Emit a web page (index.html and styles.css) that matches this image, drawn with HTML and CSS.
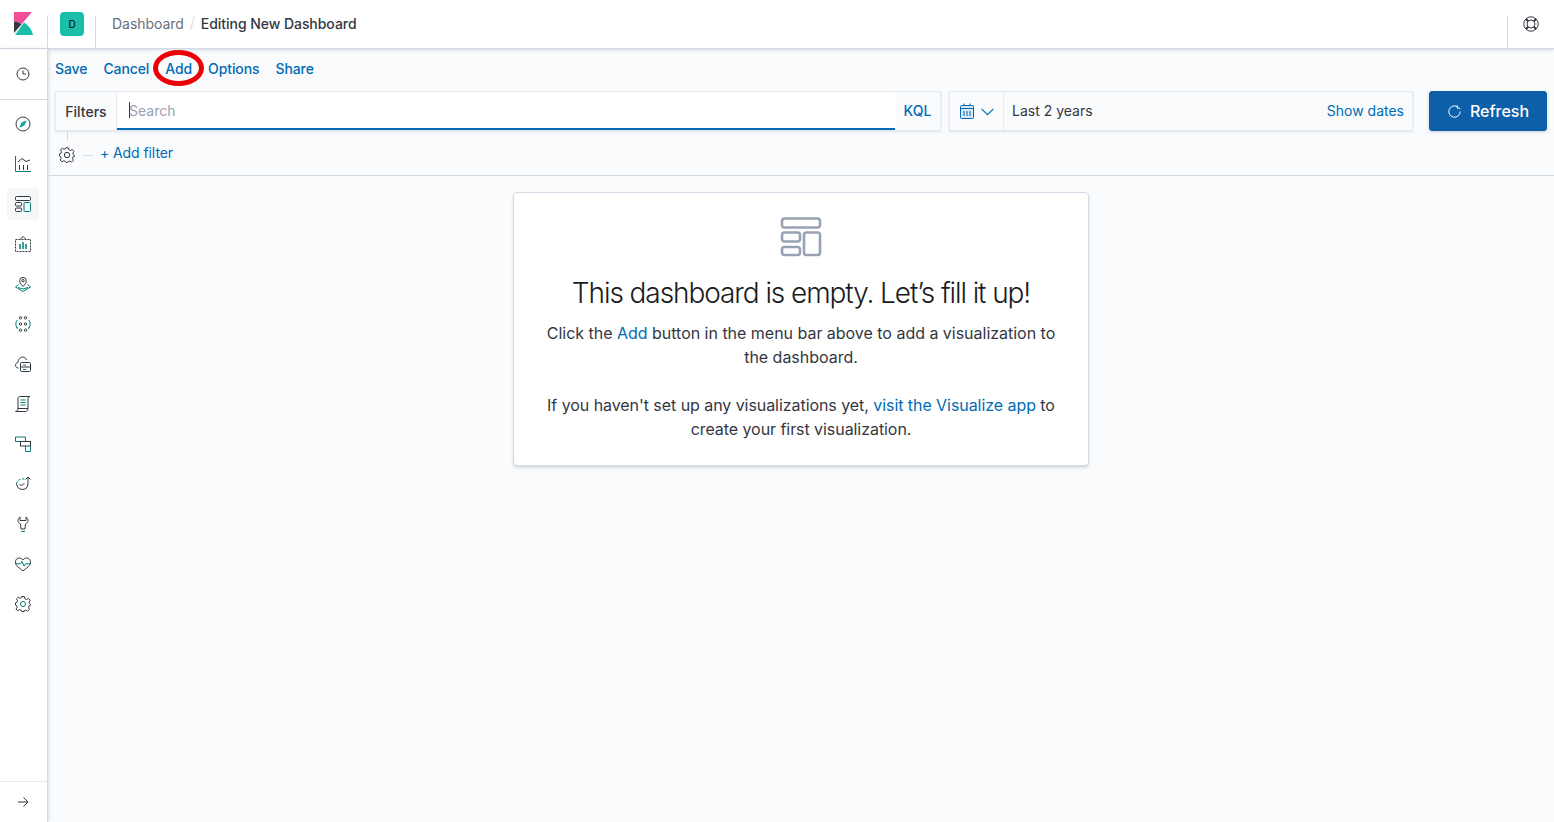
FILE: index.html
```html
<!DOCTYPE html>
<html>
<head>
<meta charset="UTF-8">
<title>Editing New Dashboard</title>
<link rel="stylesheet" href="styles.css">
</head>
<body>
<header class="topbar">
	<div class="logo-cell">
		<svg width="20" height="24" viewBox="0 0 20 24"><path d="M1 0H19L8.500 12.300C6.600 10.600 4 9.500 1 9.400Z" fill="#f04e98"/><path d="M1 9.400C4 9.500 6.600 10.600 8.500 12.300L1 21Z" fill="#343741"/><path d="M2 23H20C19.400 18.800 16.400 14.200 11 10.200Z" fill="#1bbfa9"/></svg>
	</div>
	<div class="space-cell"><span class="space-badge">D</span></div>
	<nav class="crumbs">
		<span class="crumb-link">Dashboard</span>
		<span class="crumb-sep"></span>
		<span class="crumb-now">Editing New Dashboard</span>
	</nav>
	<div class="help-cell">
		<svg width="16" height="16" viewBox="0 0 16 16" fill="none" stroke="#343741"><circle cx="8" cy="8" r="7.200"/><circle cx="8" cy="8" r="4"/><path d="M2.900 2.900L5.200 5.200M13.100 2.900L10.800 5.200M2.900 13.100L5.200 10.800M13.100 13.100L10.800 10.800" stroke-width="2"/></svg>
	</div>
</header>

<div class="layout">
	<aside class="sidenav">
		<div class="nav-recent">
			<svg width="16" height="16" viewBox="0 0 16 16" fill="none" stroke="#343741"><circle cx="8" cy="8" r="6"/><path d="M8 4.500V8H11"/></svg>
		</div>
		<div class="nav-list">
			<a class="nav-item"><svg width="16" height="16" viewBox="0 0 16 16" fill="none" stroke="#343741"><circle cx="8" cy="8" r="7"/><path d="M11 5L9.200 9.200L5 11L6.800 6.800Z" fill="#1ba9a0" stroke="#1ba9a0"/></svg></a>
			<a class="nav-item"><svg width="16" height="16" viewBox="0 0 16 16" fill="none" stroke="#343741"><path d="M.5 0V15.500H16" stroke="#017d73"/><path d="M4.500 9V14M8.500 9V14M12.500 9V14"/><path d="M3 6L7 2.500L11 5.500L15 4"/></svg></a>
			<a class="nav-item active"><svg width="16" height="16" viewBox="0 0 16 16" fill="none" stroke="#343741"><rect x=".5" y=".5" width="15" height="4" rx="1"/><rect x=".5" y="6.500" width="6" height="3.500" rx="1"/><rect x=".5" y="12" width="6" height="3.500" rx="1"/><rect x="9" y="6.500" width="6.500" height="9" rx="1" stroke="#017d73"/></svg></a>
			<a class="nav-item"><svg width="16" height="16" viewBox="0 0 16 16" fill="none" stroke="#343741"><rect x=".5" y="3.500" width="15" height="12" stroke-dasharray="2 1"/><path d="M5 3.500L8 .5L11 3.500"/><path d="M5 8V13M8 6V13M11 8V13" stroke="#017d73" stroke-width="1.500"/></svg></a>
			<a class="nav-item"><svg width="16" height="16" viewBox="0 0 16 16" fill="none" stroke="#343741"><path d="M8 10.500C6 8.500 4.700 6.800 4.700 4.700A3.300 3.300 0 0 1 11.300 4.700C11.300 6.800 10 8.500 8 10.500Z"/><circle cx="8" cy="4.700" r="1.200"/><path d="M3.500 8.500L.5 11L8 15.500L15.500 11L12.500 8.500M3 11.500L8 13L13 11.500" stroke="#017d73"/></svg></a>
			<a class="nav-item"><svg width="16" height="16" viewBox="0 0 16 16" fill="none" stroke="#343741"><circle cx="5.500" cy="1.800" r="1.200"/><circle cx="10.500" cy="1.800" r="1.200"/><circle cx="5.500" cy="8" r="1.200"/><circle cx="10.500" cy="8" r="1.200"/><circle cx="5.500" cy="14.200" r="1.200"/><circle cx="10.500" cy="14.200" r="1.200"/><path d="M2.500 4C.3 6 .3 10 2.500 12M1 11.500L3 12.500M13.500 4C15.700 6 15.700 10 13.500 12M15 11.500L13 12.500" stroke="#017d73"/></svg></a>
			<a class="nav-item"><svg width="16" height="16" viewBox="0 0 16 16" fill="none" stroke="#343741"><path d="M3.500 12C1.500 12 .5 10.700 .5 9.200C.5 7.800 1.500 6.800 2.800 6.700C3 3.300 5.300 1 7.500 1C9.500 1 11 2.200 11.500 4"/><rect x="5.500" y="6.500" width="10" height="9" rx="1"/><path d="M5.500 11H15.500"/><path d="M8 9H11M8 13.500H11" stroke="#017d73"/></svg></a>
			<a class="nav-item"><svg width="16" height="16" viewBox="0 0 16 16" fill="none" stroke="#343741"><path d="M3 13V2.500C3 1.300 4 .5 5 .5H15C13.800 .5 13 1.300 13 2.500V12.500"/><path d="M.5 15.500H10.500C11.800 15.500 13 14.500 13 12.500H3C3 14 1.800 15.500 .5 15.500Z"/><path d="M5.500 4H10.500M5.500 6.500H10.500M5.500 9H10.500" stroke="#017d73"/></svg></a>
			<a class="nav-item"><svg width="16" height="16" viewBox="0 0 16 16" fill="none" stroke="#343741"><path d="M5.500 5.500H.5V1H10.500V5.500" stroke="#017d73"/><rect x="5.500" y="5.500" width="10" height="4.500"/><path d="M10.500 10V15.500H15.500V10" stroke="#017d73"/></svg></a>
			<a class="nav-item"><svg width="16" height="16" viewBox="0 0 16 16" fill="none" stroke="#343741"><path d="M1.500 8A6 6 0 0 0 12 11.500C13 10 13 7 13 1"/><path d="M10.500 3.500L13 1L15.500 3.500"/><path d="M4.500 8L6.500 10L9.500 7"/><path d="M1.500 8A6 6 0 0 1 9.500 3.200" stroke="#017d73" stroke-dasharray="2.500 1.500"/></svg></a>
			<a class="nav-item"><svg width="16" height="16" viewBox="0 0 16 16" fill="none" stroke="#343741"><path d="M5 1C3.500 2 3 3.200 3 4.500C3 6.300 4.300 7.500 5.500 8L6 13H10L10.500 8C11.700 7.500 13 6.300 13 4.500C13 3.200 12.500 2 11 1V4.500H5Z"/><path d="M6 15.500H10" stroke="#017d73"/></svg></a>
			<a class="nav-item"><svg width="16" height="16" viewBox="0 0 16 16" fill="none" stroke="#343741"><path d="M2.500 10.500C1.200 9 .5 7.800 .5 5.800C.5 3.500 2.200 2 4.200 2C5.800 2 7 2.800 8 4C9 2.800 10.200 2 11.800 2C13.800 2 15.500 3.500 15.500 5.800C15.500 7.800 14.800 9 13.500 10.500L8 15L2.500 10.500Z"/><path d="M0 7.800H5.500L7 5.500L9 10L10.500 7.800H16" stroke="#017d73"/></svg></a>
			<a class="nav-item"><svg width="16" height="16" viewBox="0 0 16 16" fill="none" stroke="#343741"><path d="M6.700 .5H9.300L9.800 2.700L11.500 3.500L13.500 2.400L15.300 4.300L14 6.200L14.800 7.800L15.500 8.500V9.200L14 9.800L13.500 11.600L14.500 13.500L12.600 15.200L10.800 14L9.300 14.700V15.500H6.700L6.200 14.200L4.600 13.600L2.700 14.800L1 13L2.200 11.200L1.500 9.600L.5 9V6.800L2 6.300L2.500 4.600L1.500 2.800L3.300 1.100L5 2.300L6.500 1.700Z"/><circle cx="8" cy="8" r="2.500" stroke="#017d73"/></svg></a>
		</div>
		<div class="nav-toggle">
			<svg width="16" height="16" viewBox="0 0 16 16" fill="none" stroke="#343741"><path d="M3 8H12.500M8.500 3.500L13 8L8.500 12.500"/></svg>
		</div>
	</aside>

	<main class="content">
		<div class="menu-row">
			<a class="menu-link">Save</a>
			<a class="menu-link">Cancel</a>
			<a class="menu-link">Add</a>
			<a class="menu-link">Options</a>
			<a class="menu-link">Share</a>
		</div>
		<span class="circle-mark"></span>

		<div class="query-row">
			<div class="query-box">
				<span class="filters-label">Filters</span>
				<div class="search-input"><span class="caret"></span><span class="placeholder">Search</span></div>
				<span class="kql">KQL</span>
			</div>
			<div class="date-box">
				<span class="date-icons">
					<svg width="16" height="16" viewBox="0 0 16 16" fill="none" stroke="#006bb4"><rect x="1.500" y="2.500" width="13" height="13" rx="1" fill="#d9e8f3"/><path d="M1.500 5.500H14.500M5 .5V3M11 .5V3M5 8V13M8 8V13M11 8V13"/></svg>
					<svg width="13" height="13" viewBox="0 0 12 12" fill="none" stroke="#006bb4"><path d="M.5 3.500L6 9L11.500 3.500"/></svg>
				</span>
				<span class="date-text">Last 2 years</span>
				<span class="show-dates">Show dates</span>
			</div>
			<button class="refresh-btn">
				<svg width="13" height="13" viewBox="0 0 16 16" fill="none" stroke="#fff" stroke-width="1.200"><path d="M11.500 2A7 7 0 1 0 15 8"/><path d="M11.500 .5V4H15"/></svg>
				Refresh
			</button>
		</div>

		<div class="filter-row">
			<span class="filter-stem"></span>
			<svg width="16" height="16" viewBox="0 0 16 16" fill="none" stroke="#343741"><path d="M6.700 .8H9.300L9.800 2.700L11.500 3.500L13.300 2.500L15 4.500L13.800 6.200L14.300 7.800L15.500 8.500V9.300L14 9.800L13.500 11.600L14.500 13.300L12.600 15L10.800 14L9.300 14.600L8.800 15.500H7.200L6.200 14.200L4.600 13.800L2.900 14.800L1.100 13L2.200 11.200L1.600 9.600L.5 9V7L2 6.300L2.500 4.600L1.500 2.800L3.300 1.300L5 2.300L6.500 1.700Z"/><circle cx="8" cy="8" r="2.700"/></svg>
			<span class="filter-dash"></span>
			<a class="add-filter">+ Add filter</a>
		</div>

		<div class="canvas">
			<section class="empty-card">
				<svg class="empty-icon" width="42" height="40" viewBox="0 0 42 40" fill="none" stroke="#98a2b3" stroke-width="2.600"><rect x="2" y="1.500" width="38" height="9" rx="2.500"/><rect x="2" y="15.500" width="18" height="9" rx="2.500"/><rect x="2" y="30" width="18" height="8" rx="2.500"/><rect x="24" y="15.500" width="16" height="22.500" rx="2.500"/></svg>
				<h1 class="empty-title">This dashboard is empty. Let’s fill it up!</h1>
				<p class="empty-text">Click the <a class="text-link">Add</a> button in the menu bar above to add a visualization to the dashboard.</p>
				<p class="empty-text">If you haven't set up any visualizations yet, <a class="text-link">visit the Visualize app</a> to create your first visualization.</p>
			</section>
		</div>
	</main>
</div>
</body>
</html>
```

FILE: styles.css
```css
* {
	box-sizing: border-box;
}
html, body {
	height: 100%;
}
body {
	margin: 0;
	font-family: Inter, "Noto Sans", sans-serif;
	font-size: 14px;
	color: #343741;
	background-color: #fafbfd;
	overflow: hidden;
	display: flex;
	flex-direction: column;
}
a {
	color: #006bb4;
}

.topbar {
	height: 49px;
	flex: none;
	display: flex;
	background-color: #fff;
	border-bottom: 1px solid #d3dae6;
	box-shadow: 0 1px 3px rgba(152, 162, 179, 0.4);
}
.logo-cell {
	width: 47px;
	padding: 12px 0 0 13px;
}
.space-cell {
	width: 48px;
	height: 32px;
	margin-top: 16px;
	border-left: 1px solid #d3dae6;
	position: relative;
}
.space-badge {
	position: absolute;
	left: 12px;
	top: -4px;
	width: 24px;
	height: 24px;
	border-radius: 4px;
	background-color: #1bbfa9;
	color: #000;
	font-size: 10px;
	line-height: 24px;
	text-align: center;
}
.crumbs {
	flex: 1;
	display: flex;
	align-items: center;
	height: 32px;
	margin-top: 16px;
	padding: 0 0 18px 16px;
	border-left: 1px solid #d3dae6;
}
.crumb-link {
	color: #69707d;
	letter-spacing: -0.04px;
}
.crumb-sep {
	width: 1px;
	height: 14px;
	margin: 0 8px;
	background-color: #d3dae6;
	transform: rotate(15deg);
}
.crumb-now {
	color: #343741;
	font-weight: 500;
	letter-spacing: -0.05px;
}
.help-cell {
	width: 47px;
	height: 32px;
	margin-top: 16px;
	padding-left: 15px;
	border-left: 1px solid #d3dae6;
}
.help-cell svg {
	display: block;
}

.layout {
	flex: 1;
	min-height: 0;
	display: flex;
}
.sidenav {
	width: 48px;
	flex: none;
	display: flex;
	flex-direction: column;
	background-color: #fff;
	border-right: 1px solid #d3dae6;
	box-shadow: 1px 0 3px rgba(152, 162, 179, 0.35);
}
.nav-recent {
	height: 51px;
	flex: none;
	display: flex;
	align-items: center;
	justify-content: center;
	padding-right: 1px;
	border-bottom: 1px solid #d3dae6;
}
.nav-list {
	flex: 1;
	padding-top: 8px;
}
.nav-item {
	display: flex;
	align-items: center;
	justify-content: center;
	width: 32px;
	height: 32px;
	margin: 0 0 8px 7px;
	border-radius: 4px;
}
.nav-item.active {
	background-color: #f5f7fa;
}
.nav-toggle {
	height: 41px;
	flex: none;
	display: flex;
	align-items: center;
	justify-content: center;
	padding-right: 1px;
	border-top: 1px solid #e6ebf2;
}

.content {
	flex: 1;
	min-width: 0;
	display: flex;
	flex-direction: column;
	position: relative;
}
.menu-row {
	display: flex;
	padding: 11px 0 0 7px;
	height: 42px;
}
.menu-link {
	font-weight: 500;
	line-height: 17px;
	margin-right: 16px;
	letter-spacing: -0.1px;
}
.circle-mark {
	position: absolute;
	left: 105px;
	top: 1px;
	width: 51px;
	height: 36px;
	border: 5px solid #ec0008;
	border-radius: 50%;
}

.query-row {
	display: flex;
	padding-left: 7px;
	height: 40px;
}
.query-box {
	width: 886px;
	display: flex;
	align-items: stretch;
	border: 1px solid #e6ebf2;
	box-shadow: 0 1px 2px rgba(152, 162, 179, 0.3);
	background-color: #fafbfd;
}
.filters-label {
	width: 61px;
	flex: none;
	border-right: 1px solid #e6ebf2;
	font-weight: 500;
	text-align: center;
	line-height: 40px;
}
.search-input {
	flex: 1;
	display: flex;
	align-items: center;
	padding-left: 12px;
	background-color: #fff;
	border-bottom: 2px solid #006bb4;
}
.caret {
	width: 1px;
	height: 16px;
	background-color: #343741;
}
.placeholder {
	color: #98a2b3;
	margin-left: -1px;
}
.kql {
	width: 45px;
	flex: none;
	color: #006bb4;
	font-weight: 500;
	text-align: center;
	line-height: 38px;
}
.date-box {
	width: 464px;
	margin-left: 8px;
	display: flex;
	align-items: center;
	border: 1px solid #e6ebf2;
	box-shadow: 0 1px 2px rgba(152, 162, 179, 0.3);
}
.date-icons {
	width: 54px;
	height: 38px;
	flex: none;
	display: flex;
	align-items: center;
	gap: 6px;
	padding-left: 9px;
	border-right: 1px solid #e6ebf2;
}
.date-text {
	flex: 1;
	padding-left: 8px;
	margin-bottom: 2px;
}
.show-dates {
	color: #006bb4;
	padding-right: 8px;
	margin-bottom: 2px;
}
.refresh-btn {
	width: 118px;
	margin-left: 16px;
	padding: 0 0 0 1px;
	display: flex;
	align-items: center;
	justify-content: center;
	gap: 9px;
	border: 1px solid #0d5fa8;
	border-radius: 3px;
	background-color: #0d5fa8;
	color: #fff;
	font-family: inherit;
	font-size: 16px;
	font-weight: 500;
	box-shadow: 0 1px 3px rgba(152, 162, 179, 0.5);
}

.filter-row {
	height: 45px;
	flex: none;
	display: flex;
	align-items: center;
	padding: 4px 0 0 11px;
	border-bottom: 1px solid #d3dae6;
	position: relative;
}
.filter-stem {
	position: absolute;
	left: 19px;
	top: 0;
	width: 1px;
	height: 10px;
	background-color: #d3dae6;
}
.filter-dash {
	width: 10px;
	height: 1px;
	margin: 0 7px 0 8px;
	background-color: #d3dae6;
}
.add-filter {
	color: #006bb4;
	margin-bottom: 6px;
	letter-spacing: -0.08px;
}

.canvas {
	flex: 1;
	padding-top: 16px;
	display: flex;
	justify-content: center;
	align-items: flex-start;
}
.empty-card {
	width: 576px;
	height: 274px;
	padding: 24px 24px 0;
	text-align: center;
	background-color: #fff;
	border: 1px solid #d3dae6;
	border-radius: 4px;
	box-shadow: 0 2px 3px rgba(152, 162, 179, 0.35);
}
.empty-icon {
	display: block;
	margin: 0 auto;
}
.empty-title {
	margin: 16px 0 0;
	font-size: 28px;
	font-weight: 300;
	line-height: 40px;
	letter-spacing: -1.08px;
	color: #1a1c21;
}
.empty-text {
	margin: 8px 0 24px;
	font-size: 16px;
	line-height: 24px;
	letter-spacing: -0.02px;
	color: #343741;
}
.empty-text + .empty-text {
	margin-top: 24px;
	letter-spacing: -0.06px;
}
.text-link {
	color: #006bb4;
}
```
